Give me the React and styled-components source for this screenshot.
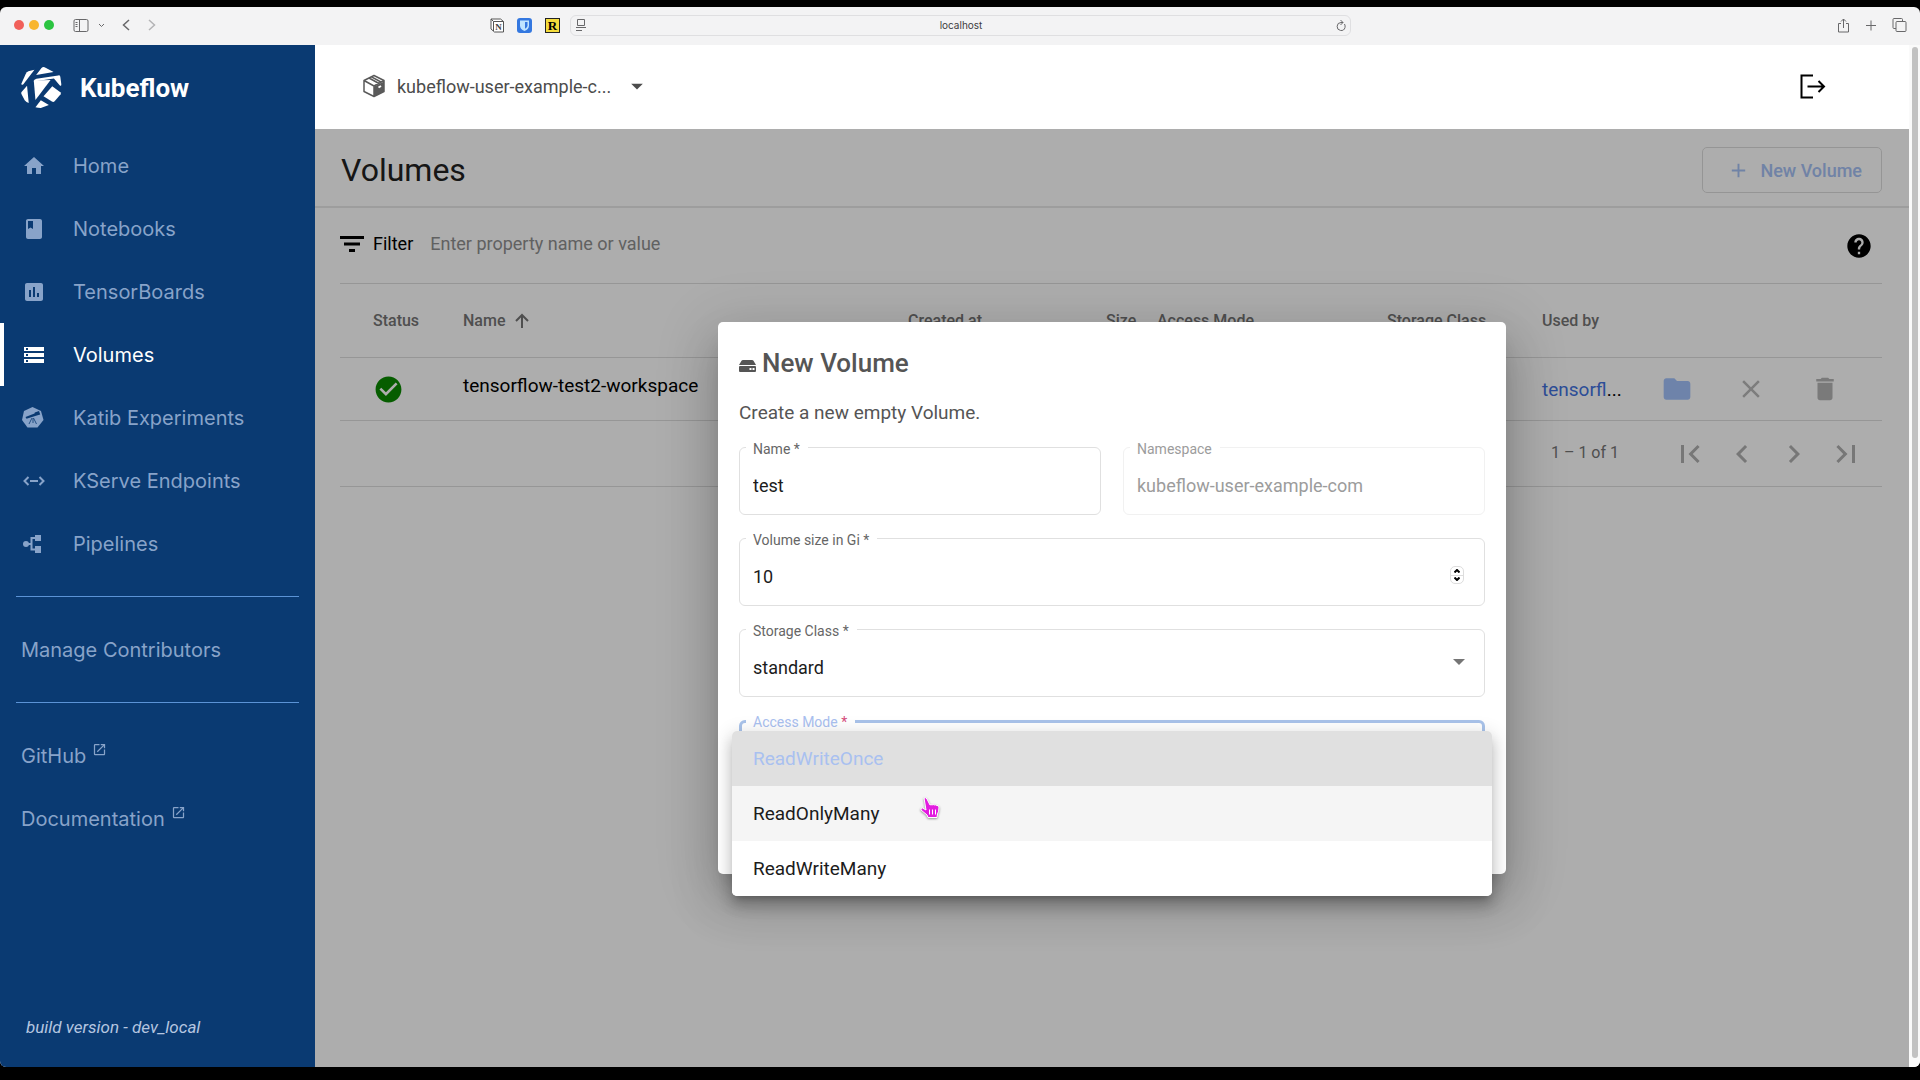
import React, {useState} from 'react'
import styled, {createGlobalStyle} from 'styled-components'
import {
  MdHome,
  MdBook,
  MdAssessment,
  MdStorage,
  MdOpenInNew,
  MdAdd,
  MdHelp,
  MdCheckCircle,
  MdFolder,
  MdClose,
  MdDelete,
  MdFirstPage,
  MdChevronLeft,
  MdChevronRight,
  MdLastPage,
  MdArrowDropDown,
} from 'react-icons/md'

const GlobalStyle = createGlobalStyle`
  * {
    box-sizing: border-box;
  }
  body {
    margin: 0;
    background: #000;
    font-family: Roboto, "Liberation Sans", sans-serif;
  }
  button, input, select {
    font-family: inherit;
  }
`

const BrowserWindow = styled.div`
  display: flex;
  flex-direction: column;
  height: 100vh;
  padding: 7px 0 13px;
`
const Toolbar = styled.header`
  display: grid;
  grid-template-columns: 1fr 781px 1fr;
  align-items: center;
  height: 38px;
  padding: 0 13px 2px 14px;
  background: #f3f3f4;
  border-radius: 6px 6px 0 0;
  color: #68686a;
`
const ToolGroup = styled.div`
  display: flex;
  align-items: center;
  justify-content: ${p => p.$end ? 'flex-end' : 'flex-start'};
  gap: ${p => p.$gap || 0}px;
  svg {
    display: block;
  }
`
const Light = styled.span`
  width: 10px;
  height: 10px;
  margin-right: 5px;
  border-radius: 50%;
  background: ${p => p.$color};
`
const ToolButton = styled.button`
  display: flex;
  padding: 0;
  border: 0;
  background: none;
  color: ${p => p.$dim ? '#b4b4b6' : 'inherit'};
  margin-left: ${p => p.$space || 0}px;
`
const Extensions = styled.div`
  display: flex;
  align-items: center;
  gap: 13px;
  margin: 0 10px 0 auto;
`
const Address = styled.div`
  display: flex;
  align-items: center;
  height: 21px;
  padding: 0 4px 0 5px;
  border: 1px solid #dfdfe1;
  border-radius: 6px;
`
const AddressInput = styled.input`
  flex: 1;
  min-width: 0;
  border: 0;
  padding: 0;
  background: none;
  text-align: center;
  font: 10px Inter, sans-serif;
  color: #3c3c3e;
`
const Screen = styled.div`
  display: flex;
  flex: 1;
  min-height: 0;
  background: #fff;
  border-radius: 0 0 6px 6px;
  overflow: hidden;
`
const Sidebar = styled.nav`
  display: flex;
  flex-direction: column;
  flex: 0 0 315px;
  background: #0a3a72;
  font-family: Inter, sans-serif;
`
const Brand = styled.a`
  display: flex;
  align-items: center;
  gap: 18px;
  height: 89px;
  padding: 0 21px 4px;
  color: #fff;
  font: 700 26px Roboto, sans-serif;
  text-decoration: none;
`
const NavItem = styled.a`
  display: flex;
  align-items: center;
  height: 63px;
  padding-left: 18px;
  border-left: 4px solid ${p => p.$active ? '#fff' : 'transparent'};
  color: ${p => p.$active ? '#fff' : '#88a3c9'};
  font-size: 20px;
  text-decoration: none;
  svg {
    width: 24px;
    height: 24px;
    margin-right: 27px;
  }
`
const NavLink = styled.a`
  display: flex;
  align-items: center;
  height: 63px;
  padding-left: 21px;
  color: #88a3c9;
  font-size: 20px;
  text-decoration: none;
  svg {
    margin: 0 0 12px 6px;
  }
`
const Divider = styled.hr`
  width: calc(100% - 32px);
  margin: 21px 16px;
  border: 0;
  border-top: 1px solid #5b93d6;
`
const BuildVersion = styled.div`
  margin-top: auto;
  padding: 0 26px 29px;
  color: #b5c6e0;
  font: italic 17px/22px Roboto, sans-serif;
`
const Main = styled.div`
  display: flex;
  flex-direction: column;
  flex: 1;
  min-width: 0;
`
const TopBar = styled.div`
  display: flex;
  align-items: center;
  justify-content: space-between;
  height: 84px;
  padding: 0 83px 2px 48px;
`
const NamespaceButton = styled.button`
  display: flex;
  align-items: center;
  gap: 12px;
  padding: 0;
  border: 0;
  background: none;
  color: #4c4c4c;
  font-size: 18px;
`
const IconButton = styled.button`
  display: flex;
  align-items: center;
  justify-content: center;
  width: ${p => p.$width || 24}px;
  padding: 0;
  border: 0;
  background: none;
  color: ${p => p.$color || '#000'};
`
const Page = styled.main`
  position: relative;
  flex: 1;
  min-height: 0;
  background: #fff;
  box-shadow: inset 0 8px 6px -3px rgba(255, 255, 255, 0.1);
`
const TitleBar = styled.div`
  display: flex;
  align-items: center;
  justify-content: space-between;
  height: 79px;
  padding: 5px 27px 0 26px;
  border-bottom: 2px solid #e8e8e8;
`
const PageTitle = styled.h1`
  margin: 0;
  font-size: 32px;
  font-weight: 400;
  color: #212121;
`
const NewVolumeButton = styled.button`
  display: flex;
  align-items: center;
  gap: 10px;
  height: 46px;
  padding: 0 19px 0 24px;
  border: 1px solid #dcdcdc;
  border-radius: 5px;
  background: none;
  color: #a6c1f5;
  font-size: 18px;
  font-weight: 500;
`
const TableArea = styled.div`
  padding: 0 27px 0 25px;
`
const FilterRow = styled.div`
  display: flex;
  align-items: center;
  height: 75px;
  padding-right: 9px;
`
const FilterBox = styled.div`
  display: flex;
  align-items: center;
  flex: 1;
  padding-bottom: 4px;
  font-size: 18px;
  label {
    margin: 0 17px 0 9px;
  }
`
const FilterInput = styled.input`
  flex: 1;
  padding: 0;
  border: 0;
  background: none;
  font-size: 18px;
  color: #000;
  &::placeholder {
    color: #8f8f8f;
  }
`
const Table = styled.table`
  width: 100%;
  table-layout: fixed;
  border-collapse: collapse;
  border-top: 1px solid #dedede;
`
const HeadCell = styled.th`
  height: 74px;
  padding: 0 0 0 ${p => p.$indent || 0}px;
  border-bottom: 1px solid #dedede;
  text-align: left;
  font-size: 16px;
  font-weight: 500;
  color: #757575;
  svg {
    margin-left: 10px;
    vertical-align: -2px;
  }
`
const Cell = styled.td`
  height: 63px;
  padding: 0 0 0 ${p => p.$indent || 0}px;
  border-bottom: 1px solid #dedede;
  font-size: 19px;
  white-space: nowrap;
  svg {
    display: block;
  }
  a {
    color: #4272e0;
    text-decoration: none;
  }
`
const NameCell = styled(Cell)`
  padding-bottom: 7px;
`
const Paginator = styled.div`
  display: flex;
  align-items: center;
  justify-content: flex-end;
  height: 66px;
  padding-right: 10px;
  border-bottom: 1px solid #dedede;
  color: #757575;
  font-size: 16px;
  span {
    margin-right: 45px;
    padding-bottom: 2px;
  }
`
const Backdrop = styled.div`
  position: absolute;
  inset: 0;
  display: flex;
  align-items: center;
  justify-content: center;
  background: rgba(0, 0, 0, 0.32);
`
const Dialog = styled.form`
  width: 788px;
  max-width: 90%;
  padding: 21px 21px 86px;
  border-radius: 5px;
  background: #fff;
  box-shadow: 0 14px 19px -9px rgba(0, 0, 0, 0.2),
    0 30px 48px 4px rgba(0, 0, 0, 0.14),
    0 11px 58px 10px rgba(0, 0, 0, 0.12);
`
const DialogTitle = styled.h2`
  display: flex;
  align-items: center;
  gap: 6px;
  margin: 0;
  font-size: 26px;
  line-height: 40px;
  font-weight: 500;
  color: #555;
  svg {
    margin-top: 5px;
  }
`
const DialogText = styled.p`
  margin: 16px 0 20px;
  font-size: 19px;
  line-height: 28px;
  color: #555;
`
const Fields = styled.div`
  display: grid;
  grid-template-columns: 1fr 1fr;
  gap: 23px 22px;
`
const Field = styled.div`
  position: relative;
  display: flex;
  align-items: center;
  grid-column: ${p => p.$wide ? '1 / -1' : 'auto'};
  height: 68px;
  padding: 8px 19px 0 13px;
  border: ${p => p.$focused ? '3px solid #a9c3ea' : `1px solid ${p.$disabled ? '#f1f1f1' : '#e0e0e0'}`};
  border-radius: 6px;
`
const FieldLabel = styled.label`
  position: absolute;
  top: ${p => p.$focused ? -11 : -9}px;
  left: ${p => p.$focused ? 4 : 6}px;
  padding: 0 8px 0 7px;
  background: #fff;
  font-size: 14px;
  line-height: 20px;
  color: ${p => p.$focused ? '#a9c0f0' : p.$disabled ? '#9c9c9c' : '#666'};
  span {
    color: ${p => p.$focused ? '#d64d7c' : 'inherit'};
  }
`
const TextInput = styled.input`
  flex: 1;
  min-width: 0;
  height: 40px;
  padding: 0;
  border: 0;
  outline: 0;
  background: none;
  font-size: 18px;
  color: #1c1c1c;
  appearance: textfield;
  &:disabled {
    color: #9c9c9c;
  }
  &::-webkit-inner-spin-button {
    display: none;
  }
`
const Select = styled.select`
  flex: 1;
  height: 40px;
  padding: 0;
  border: 0;
  outline: 0;
  background: none;
  appearance: none;
  font-size: 18px;
  color: #1c1c1c;
`
const AccessSelect = styled.button`
  flex: 1;
  height: 40px;
  border: 0;
  background: none;
`
const Stepper = styled.div`
  display: flex;
  flex-direction: column;
  margin: 0 1px 3px 0;
  width: 14px;
  border: 1px solid #ddd;
  border-radius: 5px;
  button {
    display: flex;
    justify-content: center;
    align-items: center;
    height: 8px;
    padding: 0;
    border: 0;
    background: none;
  }
  button + button {
    border-top: 1px solid #ddd;
  }
`
const Menu = styled.ul`
  position: absolute;
  top: 8px;
  left: -10px;
  right: -10px;
  z-index: 1;
  margin: 0;
  padding: 0;
  overflow: hidden;
  list-style: none;
  background: #fff;
  border-radius: 5px;
  box-shadow: 0 6px 6px -4px rgba(0, 0, 0, 0.2),
    0 10px 13px 1px rgba(0, 0, 0, 0.14),
    0 4px 18px 3px rgba(0, 0, 0, 0.12);
`
const Option = styled.li`
  height: 55px;
  padding-left: 21px;
  font-size: 19px;
  line-height: 55px;
  color: ${p => p.$selected ? '#a9c0f0' : '#1c1c1c'};
  background: ${p => p.$selected ? '#e0e0e0' : p.$hovered ? '#f5f5f5' : '#fff'};
`
const Pointer = styled.svg`
  position: absolute;
  top: 73px;
  left: 177px;
  z-index: 2;
  filter: drop-shadow(0 1px 1px rgba(0, 0, 0, 0.4));
`
const ScrollTrack = styled.div`
  flex: 0 0 11px;
  padding: 2px 2px 9px 3px;
  background: #fafafa;
`
const ScrollThumb = styled.div`
  height: 100%;
  border-radius: 3px;
  background: #c2c2c2;
`

const Logo = () => (
  <svg width="41" height="41" viewBox="36 26 122 122" fill="#fff" aria-hidden="true">
    <path d="M81 50 97 29q5-5 12-1l24 13z" />
    <path d="M76 34 58 39q-5 2-8 8L37 76q0 5 6 1z" />
    <path d="m54 82-17 19q-1 4 1 7l9 17q5 6 12 8z" />
    <path d="m74 66 50-1-45 59z" />
    <path d="M82 61q-8 2-8 8l60-9 17 20q5 5 5-3l-3-22q-1-5-6-4z" />
    <path d="m129 83 24 18q3 3 1 6l-18 21q-3 3-8 1l-25-16z" />
    <path d="m95 125 24 14-24 9q-8 0-16-2z" />
  </svg>
)

const KatibIcon = () => (
  <svg viewBox="0 0 24 24" fill="currentColor" aria-hidden="true">
    <path d="m10.500 1 8.500 4 2.500 9-6 7.500h-10L0 14l2-9z" />
    <path d="m3.500 11 9-3.500.3-1 4.200-1.500 1.200 3.500-4.200 1.200-9.500 3z" fill="#0a3a72" />
    <path d="m10 12-3 6M11 12v5M11.500 12l3 6" fill="none" stroke="#0a3a72" strokeWidth=".8" />
  </svg>
)

const EndpointsIcon = () => (
  <svg viewBox="0 0 24 24" fill="none" stroke="currentColor" strokeWidth="2" aria-hidden="true">
    <path d="m6.500 8-4 4 4 4M17.500 8l4 4-4 4M8 12h8" />
  </svg>
)

const PipelinesIcon = () => (
  <svg viewBox="0 0 24 24" fill="currentColor" aria-hidden="true">
    <circle cx="4" cy="12" r="3" />
    <rect x="13" y="3" width="6" height="6" />
    <rect x="13" y="14" width="6" height="7" />
    <path d="M4 12h5M13 6H9.500v11.500H13" fill="none" stroke="currentColor" strokeWidth="2" />
  </svg>
)

const CubeIcon = () => (
  <svg width="22" height="24" viewBox="0 0 22 24" aria-hidden="true">
    <path d="M11 12.500 21 7.500v10L11 22.500z" fill="#5a5a5a" />
    <path d="m11 1.500 10 5v11l-10 5-10-5v-11zM1 6.500l10 5.500 10-5.500M11 12v10.500M6 4l10 5.500M8.500 2.800 18 8" fill="none" stroke="#5a5a5a" strokeWidth="1.500" strokeLinejoin="round" />
    <path d="M15.500 13.500 18 12" stroke="#fff" strokeWidth="2" />
  </svg>
)

const DriveIcon = () => (
  <svg width="17" height="12" viewBox="0 0 17 12" fill="#555" aria-hidden="true">
    <path d="M4 0h9q1 0 1.500.8L17 5H0L2.500.8Q3 0 4 0zM1 6h15q1 0 1 1v4q0 1-1 1H1q-1 0-1-1V7q0-1 1-1z" />
    <path d="M10.500 8h2v2h-2zM13.500 8h2v2h-2z" fill="#fff" />
  </svg>
)

const Line = ({d, width = 14, height = 14, stroke = 1}) => (
  <svg width={width} height={height} viewBox={`0 0 ${width} ${height}`} fill="none" stroke="currentColor" strokeWidth={stroke} aria-hidden="true">
    <path d={d} />
  </svg>
)

const navItems = [
  {label: 'Home', icon: <MdHome />},
  {label: 'Notebooks', icon: <MdBook />},
  {label: 'TensorBoards', icon: <MdAssessment />},
  {label: 'Volumes', icon: <MdStorage />},
  {label: 'Katib Experiments', icon: <KatibIcon />},
  {label: 'KServe Endpoints', icon: <EndpointsIcon />},
  {label: 'Pipelines', icon: <PipelinesIcon />},
]

const accessModes = ['ReadWriteOnce', 'ReadOnlyMany', 'ReadWriteMany']

const BrowserToolbar = () => (
  <Toolbar>
    <ToolGroup>
      <Light $color="#f1605a" />
      <Light $color="#f8b52e" />
      <Light $color="#2bc440" />
      <ToolButton $space={14} aria-label="Sidebar">
        <Line width={16} height={13} d="M2.500.5h11q1.500 0 1.500 1.500v9q0 1.500-1.500 1.500h-11Q1 12.500 1 11V2Q1 .5 2.500.5zM6.500.5v12M2.500 3.500h2M2.500 5.500h2M2.500 7.500h2" />
      </ToolButton>
      <ToolButton $space={9} aria-label="Tab groups">
        <Line width={7} height={5} d="m1 1 2.500 2.500L6 1" />
      </ToolButton>
      <ToolButton $space={17} aria-label="Back">
        <Line width={8} height={12} d="M7 1 1.500 6 7 11" stroke={1.5} />
      </ToolButton>
      <ToolButton $space={18} $dim aria-label="Forward">
        <Line width={8} height={12} d="m1 1 5.500 5L1 11" stroke={1.5} />
      </ToolButton>
      <Extensions>
        <svg width="14" height="15" viewBox="0 0 14 15" aria-hidden="true">
          <path d="M3.500 3.500h10v10.500h-9L1 11V1h9.500l3 2.500M1 1l2.500 2.500V13" fill="#fff" stroke="#555" />
          <text x="8.500" y="12" textAnchor="middle" fontFamily="Liberation Serif, serif" fontSize="9" fontWeight="700" fill="#444">N</text>
        </svg>
        <svg width="15" height="15" viewBox="0 0 15 15" aria-hidden="true">
          <rect width="15" height="15" rx="3" fill="#3478e0" />
          <path d="M3 2.500h9v5q0 3.500-4.500 5.500Q3 11 3 7.500z" fill="#bfe4ff" />
          <path d="M8 4h2.500v4Q10 9.500 8 10.800z" fill="#3478e0" />
        </svg>
        <svg width="15" height="15" viewBox="0 0 15 15" aria-hidden="true">
          <rect x=".5" y=".5" width="14" height="14" fill="#f4dc3c" stroke="#222" />
          <text x="7.500" y="12" textAnchor="middle" fontFamily="Liberation Serif, serif" fontSize="13" fontWeight="700">R</text>
        </svg>
      </Extensions>
    </ToolGroup>
    <Address>
      <Line width={10} height={12} d="M1.500.5h7v6h-7zM0 8.500h10M0 11.500h6" />
      <AddressInput aria-label="Address" defaultValue="localhost" />
      <Line width={10} height={13} d="M8.500 5Q9.500 7 9 8.500A4 4 0 1 1 5 3.500h2M4.500 1 7 3.500 4.500 6" />
    </Address>
    <ToolGroup $end $gap={14}>
      <ToolButton aria-label="Share">
        <Line width={13} height={15} d="M4 5.500H1.500V14h10V5.500H9M6.500 10V1M4 3.500 6.500 1 9 3.500" />
      </ToolButton>
      <ToolButton aria-label="New tab">
        <Line width={14} height={13} d="M7 1.500v10M2 6.500h10" />
      </ToolButton>
      <ToolButton aria-label="Tab overview">
        <Line width={15} height={14} d="M5 3.500h8q1 0 1 1v8q0 1-1 1H5q-1 0-1-1v-8q0-1 1-1zM4 10.500H2q-1 0-1-1v-8q0-1 1-1h7.500q1 0 1 1v2" />
      </ToolButton>
    </ToolGroup>
  </Toolbar>
)

const NewVolumeDialog = () => {
  const [name, setName] = useState('test')
  const [size, setSize] = useState(10)
  const [mode, setMode] = useState('ReadWriteOnce')

  return (
    <Dialog role="dialog" aria-labelledby="dialog-title">
      <DialogTitle id="dialog-title"><DriveIcon />New Volume</DialogTitle>
      <DialogText>Create a new empty Volume.</DialogText>
      <Fields>
        <Field>
          <FieldLabel htmlFor="name">Name <span>*</span></FieldLabel>
          <TextInput id="name" value={name} onChange={e => setName(e.target.value)} />
        </Field>
        <Field $disabled>
          <FieldLabel htmlFor="namespace" $disabled>Namespace</FieldLabel>
          <TextInput id="namespace" value="kubeflow-user-example-com" disabled readOnly />
        </Field>
        <Field $wide>
          <FieldLabel htmlFor="size">Volume size in Gi <span>*</span></FieldLabel>
          <TextInput id="size" type="number" value={size} onChange={e => setSize(Number(e.target.value))} />
          <Stepper>
            <button type="button" aria-label="Increase" onClick={() => setSize(size + 1)}>
              <Line width={6} height={4} stroke={2} d="m.5 3.500 2.500-2.500 2.500 2.500" />
            </button>
            <button type="button" aria-label="Decrease" onClick={() => setSize(size - 1)}>
              <Line width={6} height={4} stroke={2} d="M.5.5 3 3 5.500.5" />
            </button>
          </Stepper>
        </Field>
        <Field $wide>
          <FieldLabel htmlFor="storage">Storage Class <span>*</span></FieldLabel>
          <Select id="storage" defaultValue="standard">
            <option>standard</option>
          </Select>
          <svg width="12" height="16" viewBox="0 0 12 16" aria-hidden="true">
            <path d="M0 0h12L6 6z" fill="#757575" />
          </svg>
        </Field>
        <Field $wide $focused>
          <FieldLabel id="mode-label" htmlFor="mode" $focused>Access Mode <span>*</span></FieldLabel>
          <AccessSelect id="mode" type="button" role="combobox" aria-expanded="true" aria-controls="mode-menu" />
          <Menu id="mode-menu" role="listbox" aria-labelledby="mode-label">
            {accessModes.map(item => (
              <Option
                key={item}
                role="option"
                aria-selected={item === mode}
                $selected={item === mode}
                $hovered={item === 'ReadOnlyMany'}
                onClick={() => setMode(item)}
              >
                {item}
              </Option>
            ))}
          </Menu>
          <Pointer width="22" height="24" viewBox="0 0 22 24" aria-hidden="true">
            <path
              d="M5 2q2-1 3 1l3 6q1-1 2 0 1-1 2.500 0 1-.5 2 .5 2-.5 2.500 1.500 0 5-1.500 7l-.5 3.500H9L8 19l-6-5q-1-2 1.500-2L7 14z"
              fill="#e31ce0"
              stroke="#fff"
            />
            <path d="M10.500 13.500v5M13.500 13.500v5M16.500 13.500v5" stroke="#fff" />
          </Pointer>
        </Field>
      </Fields>
    </Dialog>
  )
}

const VolumesPage = () => (
  <Page>
    <TitleBar>
      <PageTitle>Volumes</PageTitle>
      <NewVolumeButton><MdAdd size={23} />New Volume</NewVolumeButton>
    </TitleBar>
    <TableArea>
      <FilterRow>
        <FilterBox>
          <Line width={24} height={16} stroke={3} d="M0 1.500h24M4 8h16M9 14.500h6" />
          <label htmlFor="filter">Filter</label>
          <FilterInput id="filter" placeholder="Enter property name or value" />
        </FilterBox>
        <IconButton $width={28} aria-label="Help"><MdHelp size={28} /></IconButton>
      </FilterRow>
      <Table>
        <colgroup>
          <col width="123" />
          <col />
          <col width="198" />
          <col width="51" />
          <col width="230" />
          <col width="155" />
          <col width="98" />
          <col width="74" />
          <col width="74" />
          <col width="94" />
        </colgroup>
        <thead>
          <tr>
            <HeadCell $indent={33}>Status</HeadCell>
            <HeadCell>
              Name
              <Line width={14} height={15} stroke={2} d="M7 15V2M1 8l6-6 6 6" />
            </HeadCell>
            <HeadCell>Created at</HeadCell>
            <HeadCell>Size</HeadCell>
            <HeadCell>Access Mode</HeadCell>
            <HeadCell>Storage Class</HeadCell>
            <HeadCell>Used by</HeadCell>
            <HeadCell colSpan={3} />
          </tr>
        </thead>
        <tbody>
          <tr>
            <Cell $indent={33}><MdCheckCircle size={31} color="#098a00" /></Cell>
            <NameCell>tensorflow-test2-workspace</NameCell>
            <Cell />
            <Cell />
            <Cell />
            <Cell />
            <Cell><a href="#tensorflow">tensorfl</a>...</Cell>
            <Cell><IconButton $width={74} $color="#a3c2fb" aria-label="Browse"><MdFolder size={32} /></IconButton></Cell>
            <Cell><IconButton $width={74} $color="#b8b8b8" aria-label="Close viewer"><MdClose size={30} /></IconButton></Cell>
            <Cell><IconButton $width={74} $color="#b4b4b4" aria-label="Delete"><MdDelete size={30} /></IconButton></Cell>
          </tr>
        </tbody>
      </Table>
      <Paginator>
        <span>1 – 1 of 1</span>
        <IconButton $width={52} $color="#b0b0b0" aria-label="First page"><MdFirstPage size={36} /></IconButton>
        <IconButton $width={52} $color="#b0b0b0" aria-label="Previous page"><MdChevronLeft size={36} /></IconButton>
        <IconButton $width={52} $color="#b0b0b0" aria-label="Next page"><MdChevronRight size={36} /></IconButton>
        <IconButton $width={52} $color="#b0b0b0" aria-label="Last page"><MdLastPage size={36} /></IconButton>
      </Paginator>
    </TableArea>
    <Backdrop>
      <NewVolumeDialog />
    </Backdrop>
  </Page>
)

const App = () => (
  <BrowserWindow>
    <GlobalStyle />
    <BrowserToolbar />
    <Screen>
      <Sidebar>
        <Brand href="#home"><Logo />Kubeflow</Brand>
        {navItems.map(item => (
          <NavItem key={item.label} href="#nav" $active={item.label === 'Volumes'}>
            {item.icon}
            {item.label}
          </NavItem>
        ))}
        <Divider />
        <NavLink href="#contributors">Manage Contributors</NavLink>
        <Divider />
        <NavLink href="#github">GitHub<MdOpenInNew size={15} /></NavLink>
        <NavLink href="#docs">Documentation<MdOpenInNew size={15} /></NavLink>
        <BuildVersion>build version - dev_local</BuildVersion>
      </Sidebar>
      <Main>
        <TopBar>
          <NamespaceButton>
            <CubeIcon />
            <span>kubeflow-user-example-c...</span>
            <MdArrowDropDown size={28} />
          </NamespaceButton>
          <IconButton $width={27} aria-label="Log out">
            <Line width={27} height={25} stroke={2} d="M14 1.500H2.500v22H14M8.500 12.500H25M19.500 7l5.500 5.500-5.500 5.500" />
          </IconButton>
        </TopBar>
        <VolumesPage />
      </Main>
      <ScrollTrack>
        <ScrollThumb />
      </ScrollTrack>
    </Screen>
  </BrowserWindow>
)

export default App
